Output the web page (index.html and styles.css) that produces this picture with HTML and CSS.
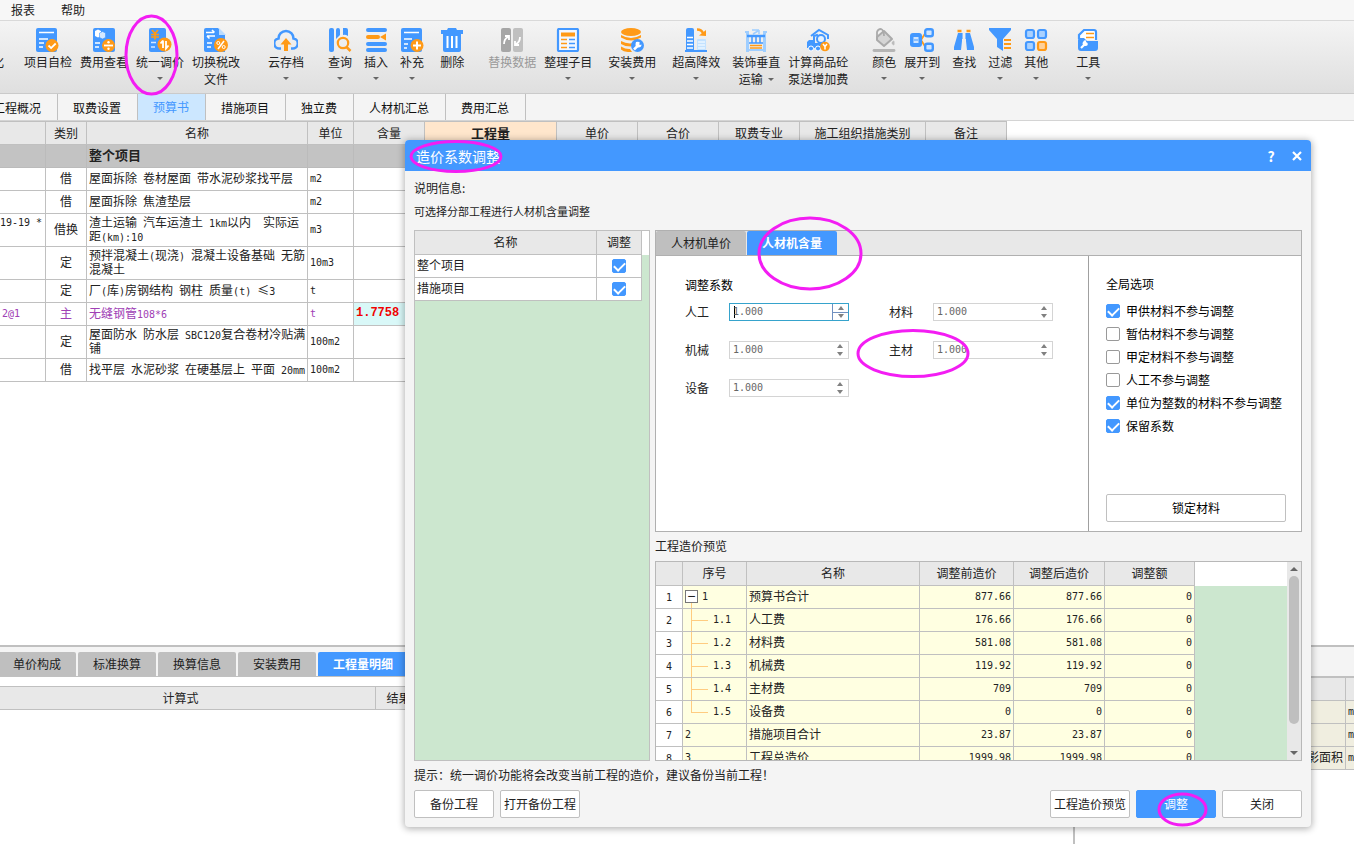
FILE: index.html
```html
<!DOCTYPE html>
<html lang="zh-CN">
<head>
  <meta charset="UTF-8">
  <title>造价系数调整</title>
  <link rel="stylesheet" href="styles.css">
</head>
<body>
  <nav class="menu">
    <a href="#">报表</a>
    <a href="#">帮助</a>
  </nav>

  <div class="toolbar">
    <button class="tool first"><svg viewBox="0 0 24 24"></svg>化</button>
    <button class="tool g20">
      <svg viewBox="0 0 24 24">
        <rect x="0" y="0" width="21" height="24" rx="2" fill="#4398ff"/>
        <path d="M3 4.5h15M3 11h9M3 15h5M3 19h4" stroke="#fff" stroke-width="1.6"/>
        <circle cx="16" cy="17.5" r="6.5" fill="#ff9a17"/>
        <path d="M12.5 17.5l2.6 2.6 4.6-4.6" fill="none" stroke="#fff" stroke-width="1.8"/>
      </svg>
      项目自检
    </button>
    <button class="tool">
      <svg viewBox="0 0 24 24">
        <rect x="1" y="0" width="22" height="24" rx="2" fill="#4398ff"/>
        <path d="M3 3l3-1.500 3 1.500v5l-3 1.500-3-1.500z" fill="#fff"/>
        <path d="M7.500 5l3-1.500 3 1.500v4.500l-3 1.500-3-1.500z" fill="#d5e8ff" stroke="#4398ff" stroke-width=".6"/>
        <path d="M3 15h5M3 19h4" stroke="#fff" stroke-width="1.6"/>
        <circle cx="16.5" cy="17.5" r="6.5" fill="#ff9a17"/>
        <path d="M12 17.5h9" stroke="#fff" stroke-width="1.8"/>
        <circle cx="16.5" cy="14.2" r="1.2" fill="#fff"/><circle cx="16.5" cy="20.8" r="1.2" fill="#fff"/>
      </svg>
      费用查看
    </button>
    <button class="tool">
      <svg viewBox="0 0 24 24">
        <rect x="1" y="0" width="17" height="24" rx="2" fill="#4398ff"/>
        <path d="M4 2l3 3.500 3-3.500M7 5v6.500M3 6.500h8M3 9h8" fill="none" stroke="#ff9a17" stroke-width="1.700"/>
        <path d="M3 14.5h5M3 19h4" stroke="#d5e8ff" stroke-width="1.5"/>
        <circle cx="16.5" cy="16.5" r="7" fill="#ff9a17"/>
        <path d="M15 12.500v7.500M12.500 15.500l2.500-3M18 13v7.500l2.500-3" fill="none" stroke="#fff" stroke-width="1.8"/>
      </svg>
      统一调价
      <i class="down"></i>
    </button>
    <button class="tool">
      <svg viewBox="0 0 24 24">
        <path d="M2 0h12l7 7v17H2q-2 0-2-2V2q0-2 2-2z" fill="#4398ff"/>
        <path d="M15 0l7 7h-7z" fill="#b9dbff"/>
        <path d="M2 4.500h8M8 2l2.500 2.500M11 8H3M5.500 10.500L3 8" fill="none" stroke="#fff" stroke-width="1.600"/>
        <path d="M3 15h5M3 19h4" stroke="#fff" stroke-width="1.5"/>
        <circle cx="17" cy="17" r="7" fill="#ff9a17"/>
        <path d="M20 13l-6 8" stroke="#fff" stroke-width="1.5"/>
        <circle cx="14.3" cy="15" r="1.500" fill="none" stroke="#fff"/><circle cx="19.700" cy="19" r="1.500" fill="none" stroke="#fff"/>
      </svg>
      <span>切换税改<br>文件</span>
    </button>
    <button class="tool g28">
      <svg viewBox="0 0 24 24">
        <path d="M7 20.500H6A5 5 0 0 1 4.500 10.500A7.500 7.500 0 0 1 19.500 10.500A5 5 0 0 1 18 20.500H17" fill="none" stroke="#4398ff" stroke-width="2.600"/>
        <path d="M12 10l5.500 6.500H14V23h-4v-6.500H6.500z" fill="#ff9a17"/>
      </svg>
      云存档
      <i class="down"></i>
    </button>
    <button class="tool g24">
      <svg viewBox="0 0 24 24">
        <rect x="1" y="0" width="5" height="24" rx="2" fill="#4398ff"/>
        <path d="M8 2q0-2 2-2t2 2v5l-4 4zM15 0h3q2 0 2 2v6q-3-2-5-1z" fill="#4398ff"/>
        <circle cx="15" cy="15" r="5.200" fill="none" stroke="#ff9a17" stroke-width="2.200"/>
        <path d="M18.500 19l4 4" stroke="#ff9a17" stroke-width="2.500"/>
      </svg>
      查询
      <i class="down"></i>
    </button>
    <button class="tool g12">
      <svg viewBox="0 0 24 24">
        <path d="M4 2h17M4 16h17M4 22h17" stroke="#4398ff" stroke-width="4" stroke-linecap="round"/>
        <path d="M4 9h10" stroke="#ff9a17" stroke-width="4" stroke-linecap="round"/>
        <path d="M16 9l6-3.500v7z" fill="#ff9a17"/>
      </svg>
      插入
      <i class="down"></i>
    </button>
    <button class="tool g12">
      <svg viewBox="0 0 24 24">
        <rect x="1" y="0" width="21" height="24" rx="2" fill="#4398ff"/>
        <path d="M4 4.500h15M4 11h8M4 16h4M4 20h3" stroke="#fff" stroke-width="1.600"/>
        <circle cx="17" cy="17.500" r="6.500" fill="#ff9a17"/>
        <path d="M13 17.500h8M17 13.500v8" stroke="#fff" stroke-width="2"/>
      </svg>
      补充
      <i class="down"></i>
    </button>
    <button class="tool g16">
      <svg viewBox="0 0 24 24">
        <path d="M1 2h6l1-2h8l1 2h6v4H1z" fill="#4398ff"/>
        <path d="M3 5h18v17q0 2-2 2H5q-2 0-2-2z" fill="#4398ff"/>
        <path d="M7.500 8v12M12 8v12M16.500 8v12" stroke="#fff" stroke-width="2"/>
      </svg>
      删除
    </button>
    <button class="tool g24 off" disabled>
      <svg viewBox="0 0 24 24">
        <rect x="1" y="0" width="10" height="24" rx="2" fill="#a6a6a6"/>
        <rect x="13" y="0" width="10" height="24" rx="2" fill="#c0c0c0"/>
        <path d="M4 16q0-5 4-7M5 8h4v4M20 9q0 5-4 7M19 17h-4v-4" fill="none" stroke="#fff" stroke-width="1.800"/>
      </svg>
      替换数据
    </button>
    <button class="tool">
      <svg viewBox="0 0 24 24">
        <rect x="2" y="1" width="20" height="22" rx="1" fill="#f3f8ff" stroke="#4398ff" stroke-width="2.200"/>
        <path d="M5 6.500h14" stroke="#ff9a17" stroke-width="4"/>
        <path d="M5 11.500h6M5 15.500h6M5 19.500h6" stroke="#ff9a17" stroke-width="1.600"/>
        <path d="M13 11.500h6M13 15.500h6M13 19.500h6" stroke="#4398ff" stroke-width="1.600"/>
      </svg>
      整理子目
      <i class="down"></i>
    </button>
    <button class="tool g16">
      <svg viewBox="0 0 24 24">
        <ellipse cx="11" cy="4" rx="10" ry="4" fill="#ff9a17"/>
        <path d="M1 7q10 6 20 0v2.500q-10 6-20 0zM1 13q6 3.500 13 2l-3 3.500q-6 0-10-2.500zM1 18.500q5 3 9 2.500l2 3Q4 24.500 1 21.500z" fill="#ff9a17"/>
        <circle cx="17.500" cy="17.500" r="6.500" fill="#4398ff"/>
        <path d="M14 21.500l4-4" stroke="#fff" stroke-width="2.500"/>
        <path d="M16 14q3-1 4 1l-1 1 1 1 1.500-.5q0 3-3 3t-3-3q0-1 .5-2.500z" fill="#fff"/>
      </svg>
      安装费用
      <i class="down"></i>
    </button>
    <button class="tool g16">
      <svg viewBox="0 0 24 24">
        <path d="M2 22V2q0-2 2-2h4q2 0 2 2v20z" fill="#4398ff"/>
        <path d="M1 23h22" stroke="#4398ff" stroke-width="2"/>
        <path d="M3 9.500h6M3 13h6M3 16.500h6M3 20h6" stroke="#fff" stroke-width="1.600"/>
        <rect x="13" y="11" width="9" height="11" rx="1" fill="#c3e2ff"/>
        <path d="M14 14h7M14 17h7M14 20h7" stroke="#fff" stroke-width="1.200"/>
        <path d="M13 1.500q5 0 6 4" fill="none" stroke="#ff9a17" stroke-width="2.400"/>
        <path d="M15 7.500l7 .5V2z" fill="#ff9a17"/>
      </svg>
      超高降效
      <i class="down"></i>
    </button>
    <button class="tool g12">
      <svg viewBox="0 0 24 24">
        <path d="M3.500 3v21M20.500 3v21" stroke="#9fceff" stroke-width="3"/>
        <path d="M8 2h7M15 2v4M9 6l5-3" fill="none" stroke="#9fceff" stroke-width="1.500"/>
        <path d="M1 4h4M19 4h4M2 22h20" stroke="#9fceff" stroke-width="2"/>
        <path d="M3 8h18" stroke="#4398ff" stroke-width="2.500"/>
        <path d="M5 15h14M8 9v6M12 9v6M16 9v6" stroke="#4398ff" stroke-width="1.500"/>
        <path d="M6 17.500h12M6 20h12" stroke="#ff9a17" stroke-width="1.500"/>
      </svg>
      <span>装饰垂直</span>
      <span>运输 <i class="down inline"></i></span>
    </button>
    <button class="tool">
      <svg viewBox="0 0 24 24">
        <path d="M5 8l8-6 9 5v4" fill="none" stroke="#4398ff" stroke-width="2"/>
        <path d="M8 16V8l3-1 2 3" fill="none" stroke="#4398ff" stroke-width="2"/>
        <circle cx="15" cy="11" r="4" fill="#e4f1ff" stroke="#4398ff" stroke-width="2"/>
        <path d="M1 14l2-2h4v3h9v5H1z" fill="#4398ff"/>
        <circle cx="5" cy="20.500" r="2.500" fill="#4398ff" stroke="#fff"/><circle cx="12" cy="20.500" r="2.500" fill="#4398ff" stroke="#fff"/>
        <circle cx="19" cy="18.500" r="4.800" fill="#ff9a17"/>
        <path d="M17 16l2 2.500 2-2.500M19 18.500v3" fill="none" stroke="#fff" stroke-width="1.500"/>
      </svg>
      <span>计算商品砼<br>泵送增加费</span>
    </button>
    <button class="tool g24">
      <svg viewBox="0 0 24 24">
        <path d="M5 9l7-6 8 8-8 7-7-6z" fill="#d5d5d5" stroke="#aaa" stroke-width="2" stroke-linejoin="round"/>
        <path d="M5 9V4q1-3 4-3 3 1 3 7" fill="none" stroke="#aaa" stroke-width="1.800"/>
        <path d="M20 15q2-4 2 0t-2 0z" fill="#bbb" stroke="#bbb"/>
        <path d="M2 22.500h20" stroke="#b5b5b5" stroke-width="2.800" stroke-linecap="round"/>
      </svg>
      颜色
      <i class="down"></i>
    </button>
    <button class="tool">
      <svg viewBox="0 0 24 24">
        <path d="M11 12l5-8M11 12l5 8" stroke="#ff9a17" stroke-width="1.800"/>
        <rect x="0" y="5" width="12" height="14" rx="3" fill="#4398ff"/>
        <rect x="3.500" y="9" width="5" height="6" fill="#cfe5ff"/>
        <path d="M4 12h4" stroke="#4398ff"/>
        <rect x="15.200" y="1.200" width="7.600" height="7" rx="2" fill="#cfe5ff" stroke="#4398ff" stroke-width="2.400"/>
        <rect x="15.200" y="15.800" width="7.600" height="7" rx="2" fill="#cfe5ff" stroke="#4398ff" stroke-width="2.400"/>
      </svg>
      展开到
      <i class="down"></i>
    </button>
    <button class="tool g12">
      <svg viewBox="0 0 24 24">
        <path d="M6 5h4v8l-1 9H2v-3zM14 5h4l4 14v3h-7l-1-9z" fill="#4398ff"/>
        <path d="M10.500 5v6M13.500 5v6" stroke="#8cc0ff"/>
        <path d="M5.500 3h4M14.500 3h4" stroke="#ff9a17" stroke-width="2.400"/>
      </svg>
      查找
    </button>
    <button class="tool g12">
      <svg viewBox="0 0 24 24">
        <path d="M1 0h22v2l-8 9v12l-6-4v-8L1 2z" fill="#4398ff"/>
        <path d="M16 12h7M16 16h7M16 20h7" stroke="#ff9a17" stroke-width="1.800"/>
      </svg>
      过滤
      <i class="down"></i>
    </button>
    <button class="tool g12">
      <svg viewBox="0 0 24 24">
        <g fill="#a9d1ff" stroke="#4398ff" stroke-width="2.200">
          <rect x="2" y="2" width="8" height="8" rx="2"/>
          <rect x="14" y="2" width="8" height="8" rx="2"/>
          <rect x="2" y="14" width="8" height="8" rx="2"/>
        </g>
        <rect x="14" y="14" width="8" height="8" rx="2" fill="#ffd199" stroke="#ff9a17" stroke-width="2.200"/>
      </svg>
      其他
      <i class="down"></i>
    </button>
    <button class="tool g28">
      <svg viewBox="0 0 24 24">
        <path d="M3 11V7l5-5h10q2 0 2 2v8" fill="#fff" stroke="#4398ff" stroke-width="2.200"/>
        <path d="M10 5.500h8M10 9.500h8" stroke="#ff9a17" stroke-width="1.600"/>
        <path d="M2 12q0-2 2-2h4l3 3h11v7q0 3-3 3H5q-3 0-3-3z" fill="#4398ff"/>
        <path d="M5 20l4-4" stroke="#fff" stroke-width="2.200"/>
        <path d="M8 12.500q3-1 2 1.500l1.500 1q1 3-2 3t-3-3z" fill="#fff"/>
      </svg>
      工具
      <i class="down"></i>
    </button>
  </div>

  <nav class="pages">
    <a href="#">工程概况</a>
    <a href="#">取费设置</a>
    <a href="#" class="active">预算书</a>
    <a href="#">措施项目</a>
    <a href="#">独立费</a>
    <a href="#">人材机汇总</a>
    <a href="#">费用汇总</a>
  </nav>

  <main class="budget">
    <table class="grid budget-table">
      <colgroup>
        <col class="c-code"><col class="c-type"><col class="c-name"><col class="c-unit"><col class="c-amount"><col class="c-qty">
        <col class="c-price"><col class="c-price"><col class="c-price"><col class="c-measure"><col class="c-price">
      </colgroup>
      <thead>
        <tr>
          <th></th><th>类别</th><th>名称</th><th>单位</th><th>含量</th><th class="current">工程量</th>
          <th>单价</th><th>合价</th><th>取费专业</th><th>施工组织措施类别</th><th>备注</th>
        </tr>
      </thead>
      <tbody>
        <tr class="group"><td></td><td></td><td>整个项目</td><td></td><td></td><td></td><td></td><td></td><td></td><td></td><td></td></tr>
        <tr><td></td><td class="mid">借</td><td>屋面拆除&ensp;卷材屋面&ensp;带水泥砂浆找平层</td><td class="n">m2</td><td></td></tr>
        <tr><td></td><td class="mid">借</td><td>屋面拆除&ensp;焦渣垫层</td><td class="n">m2</td><td></td></tr>
        <tr class="tall"><td class="n code">19-19 *</td><td class="mid">借换</td><td>渣土运输&ensp;汽车运渣土&ensp;<span class="n">1km</span>以内&ensp;&ensp;实际运<br>距<span class="n">(km):10</span></td><td class="n">m3</td><td></td></tr>
        <tr class="tall"><td></td><td class="mid">定</td><td>预拌混凝土<span class="n">(</span>现浇<span class="n">)</span>&ensp;混凝土设备基础&ensp;无筋<br>混凝土</td><td class="n">10m3</td><td></td></tr>
        <tr><td></td><td class="mid">定</td><td>厂<span class="n">(</span>库<span class="n">)</span>房钢结构&ensp;钢柱&ensp;质量<span class="n">(t)</span>&ensp;≤<span class="n">3</span></td><td class="n">t</td><td></td></tr>
        <tr class="main-material"><td class="n">2@1</td><td class="mid">主</td><td>无缝钢管<span class="n">108*6</span></td><td class="n">t</td><td class="changed">1.7758</td></tr>
        <tr class="tall"><td></td><td class="mid">定</td><td>屋面防水&ensp;防水层&ensp;<span class="n">SBC120</span>复合卷材冷贴满<br>铺</td><td class="n">100m2</td><td></td></tr>
        <tr><td></td><td class="mid">借</td><td>找平层&ensp;水泥砂浆&ensp;在硬基层上&ensp;平面&ensp;<span class="n">20mm</span></td><td class="n">100m2</td><td></td></tr>
      </tbody>
    </table>
  </main>

  <section class="details">
    <div class="details-left">
      <nav class="subtabs">
        <a href="#">单价构成</a>
        <a href="#">标准换算</a>
        <a href="#">换算信息</a>
        <a href="#">安装费用</a>
        <a href="#" class="active">工程量明细</a>
      </nav>
      <table class="grid formula-table">
        <colgroup><col class="c-formula"><col class="c-result"><col></colgroup>
        <tr><th>计算式</th><th>结果</th><th></th></tr>
      </table>
    </div>
    <div class="details-right">
      <div class="strip"></div>
      <table class="grid figure-table">
        <colgroup><col class="c-figure"><col class="c-unit"></colgroup>
        <tr><th></th><th></th></tr>
        <tr><td></td><td class="n">m</td></tr>
        <tr><td></td><td class="n">m</td></tr>
        <tr><td class="num">影面积</td><td class="n">m</td></tr>
      </table>
    </div>
  </section>

  <section class="dialog">
    <header class="dialog-title">
      <h1>造价系数调整</h1>
      <button>?</button>
      <button>
        <svg viewBox="0 0 10 10"><path d="M1 1l8 8M9 1l-8 8" stroke="#fff" stroke-width="2.200"/></svg>
      </button>
    </header>

    <div class="dialog-body">
      <p class="info">说明信息:</p>
      <p class="info small">可选择分部工程进行人材机含量调整</p>

      <div class="panels">
        <div class="scope">
          <div class="blank"></div>
          <table class="grid scope-table">
            <colgroup><col class="c-scope"><col class="c-check"></colgroup>
            <thead><tr><th>名称</th><th>调整</th></tr></thead>
            <tbody>
              <tr><td><label for="all">整个项目</label></td><td class="mid"><input type="checkbox" id="all" checked></td></tr>
              <tr><td><label for="measure">措施项目</label></td><td class="mid"><input type="checkbox" id="measure" checked></td></tr>
            </tbody>
          </table>
        </div>

        <div class="right">
          <div class="adjust">
            <nav class="adjust-tabs">
              <a href="#">人材机单价</a>
              <a href="#" class="active">人材机含量</a>
            </nav>
            <div class="adjust-content">
              <form class="factors">
                <h2>调整系数</h2>
                <div class="factor-grid">
                  <div class="factor"><label for="f1">人工</label><span class="spin focus"><input type="text" id="f1" value="1.000"><span class="arrows"><i class="up"></i><i class="down"></i></span></span></div>
                  <div class="factor"><label for="f2">材料</label><span class="spin"><input type="text" id="f2" value="1.000"><span class="arrows"><i class="up"></i><i class="down"></i></span></span></div>
                  <div class="factor"><label for="f3">机械</label><span class="spin"><input type="text" id="f3" value="1.000"><span class="arrows"><i class="up"></i><i class="down"></i></span></span></div>
                  <div class="factor"><label for="f4">主材</label><span class="spin"><input type="text" id="f4" value="1.000"><span class="arrows"><i class="up"></i><i class="down"></i></span></span></div>
                  <div class="factor"><label for="f5">设备</label><span class="spin"><input type="text" id="f5" value="1.000"><span class="arrows"><i class="up"></i><i class="down"></i></span></span></div>
                </div>
              </form>
              <div class="options">
                <h2>全局选项</h2>
                <label><input type="checkbox" checked>甲供材料不参与调整</label>
                <label><input type="checkbox">暂估材料不参与调整</label>
                <label><input type="checkbox">甲定材料不参与调整</label>
                <label><input type="checkbox">人工不参与调整</label>
                <label><input type="checkbox" checked>单位为整数的材料不参与调整</label>
                <label><input type="checkbox" checked>保留系数</label>
                <button class="btn lock">锁定材料</button>
              </div>
            </div>
          </div>

          <h2 class="preview-title">工程造价预览</h2>
          <div class="preview">
            <div class="preview-view">
              <div class="blank"></div>
              <table class="grid preview-table">
                <colgroup><col class="c-row"><col class="c-no"><col class="c-item"><col class="c-before"><col class="c-after"><col class="c-diff"></colgroup>
                <thead><tr><th></th><th>序号</th><th>名称</th><th>调整前造价</th><th>调整后造价</th><th>调整额</th></tr></thead>
                <tbody>
                  <tr><th class="n">1</th><td class="n tree"><span class="knot"><button>−</button></span>1</td><td>预算书合计</td><td class="n num">877.66</td><td class="n num">877.66</td><td class="n num">0</td></tr>
                  <tr><th class="n">2</th><td class="n tree"><span class="twig"></span>1.1</td><td>人工费</td><td class="n num">176.66</td><td class="n num">176.66</td><td class="n num">0</td></tr>
                  <tr><th class="n">3</th><td class="n tree"><span class="twig"></span>1.2</td><td>材料费</td><td class="n num">581.08</td><td class="n num">581.08</td><td class="n num">0</td></tr>
                  <tr><th class="n">4</th><td class="n tree"><span class="twig"></span>1.3</td><td>机械费</td><td class="n num">119.92</td><td class="n num">119.92</td><td class="n num">0</td></tr>
                  <tr><th class="n">5</th><td class="n tree"><span class="twig"></span>1.4</td><td>主材费</td><td class="n num">709</td><td class="n num">709</td><td class="n num">0</td></tr>
                  <tr><th class="n">6</th><td class="n tree"><span class="twig last"></span>1.5</td><td>设备费</td><td class="n num">0</td><td class="n num">0</td><td class="n num">0</td></tr>
                  <tr><th class="n">7</th><td class="n">2</td><td>措施项目合计</td><td class="n num">23.87</td><td class="n num">23.87</td><td class="n num">0</td></tr>
                  <tr><th class="n">8</th><td class="n">3</td><td>工程总造价</td><td class="n num">1999.98</td><td class="n num">1999.98</td><td class="n num">0</td></tr>
                </tbody>
              </table>
            </div>
            <div class="scrollbar"><i class="up"></i><div class="thumb"></div><i class="down"></i></div>
          </div>
        </div>
      </div>

      <p class="hint">提示：统一调价功能将会改变当前工程的造价，建议备份当前工程！</p>
      <footer class="actions">
        <button class="btn">备份工程</button>
        <button class="btn">打开备份工程</button>
        <span class="spacer"></span>
        <button class="btn">工程造价预览</button>
        <button class="btn primary">调整</button>
        <button class="btn">关闭</button>
      </footer>
    </div>
  </section>

  <!-- hand-drawn marks -->
  <svg class="marks" width="1354" height="844" viewBox="0 0 1354 844">
    <ellipse cx="151.500" cy="55" rx="25.500" ry="39"/>
    <ellipse cx="456" cy="156.500" rx="45" ry="15"/>
    <ellipse cx="810" cy="253.500" rx="51" ry="35.500"/>
    <ellipse cx="913" cy="353.500" rx="55" ry="23"/>
    <ellipse cx="1182.500" cy="809.500" rx="23.500" ry="15.500"/>
  </svg>
</body>
</html>
```

FILE: styles.css
```css
* {
  box-sizing: border-box;
}
body {
  margin: 0;
  height: 100vh;
  position: relative;
  display: flex;
  flex-direction: column;
  overflow: hidden;
  background: #fff;
  color: #222;
  font: 12px/16px "Noto Sans CJK SC", sans-serif;
}
h1, h2, p {
  margin: 0;
  font-size: 12px;
  font-weight: normal;
}
a {
  color: inherit;
  text-decoration: none;
}
button, input {
  font: inherit;
  color: inherit;
  margin: 0;
  padding: 0;
}

/* menu and toolbar */
.menu {
  display: flex;
  gap: 26px;
  height: 21px;
  padding: 2px 11px;
  background: #f7f7f7;
  border-bottom: 1px solid #d9d9d9;
}
.toolbar {
  display: flex;
  align-items: flex-start;
  height: 73px;
  padding-top: 7px;
  background: linear-gradient(#f4f4f4, #dfdfdf);
  border-bottom: 1px solid #cacaca;
}
.tool {
  flex: none;
  display: flex;
  flex-direction: column;
  align-items: center;
  margin-left: 8px;
  border: 0;
  background: none;
  line-height: 17px;
  white-space: nowrap;
}
.tool svg {
  width: 24px;
  height: 24px;
  margin-bottom: 1px;
}
.tool.first {
  width: 12px;
  margin-left: -8px;
}
.tool.g12 { margin-left: 12px; }
.tool.g16 { margin-left: 16px; }
.tool.g20 { margin-left: 20px; }
.tool.g24 { margin-left: 24px; }
.tool.g28 { margin-left: 28px; }
.tool.off {
  color: #999;
}
.up, .down {
  display: block;
  width: 0;
  height: 0;
  border: 3px solid transparent;
}
.down {
  border-top-color: #666;
  border-bottom: 0;
}
.up {
  border-bottom-color: #666;
  border-top: 0;
}
.tool .down {
  margin-top: 7px;
}
.tool .down.inline {
  display: inline-block;
  margin: 0 0 3px 2px;
}

/* page tabs */
.pages {
  display: flex;
  height: 27px;
  background: #f4f4f4;
  border-bottom: 1px solid #d4d4d4;
}
.pages a {
  padding: 6px 16px 0 15px;
  border-right: 1px solid #c0c0c0;
  white-space: nowrap;
  color: #111;
}
.pages a:first-child {
  margin-left: -22px;
}
.pages a.active {
  padding-top: 5px;
  background: #cce7ff;
  color: #4398ff;
}

/* tables */
.grid {
  border-collapse: separate;
  border-spacing: 0;
  table-layout: fixed;
}
.grid th, .grid td {
  height: 23px;
  padding: 0 2px;
  border-right: 1px solid #c0c0c0;
  border-bottom: 1px solid #c0c0c0;
  line-height: 14px;
  white-space: nowrap;
  text-align: left;
}
.grid td {
  padding-bottom: 2px;
}
.grid th {
  background: #e8e8e8;
  font-weight: normal;
  text-align: center;
}
.grid td.mid {
  text-align: center;
}
.grid td.num {
  text-align: right;
}
.n, .grid .n {
  font-family: "DejaVu Sans Mono", monospace;
  font-size: 10px;
}
.grid td.n {
  padding-bottom: 0;
}
.grid span.n {
  line-height: 10px;
}
.budget {
  flex: 1;
  min-height: 0;
  overflow: hidden;
}
.budget-table {
  width: 1007px;
  border-top: 1px solid #c0c0c0;
}
.budget-table .tall td {
  height: 33px;
}
.budget-table .group td {
  background: #c3c3c3;
  border-color: #bbb;
  font-size: 13px;
  font-weight: bold;
}
.budget-table .current {
  background: #ffe6cc;
  font-size: 13px;
  font-weight: bold;
}
.budget-table td.code {
  padding: 2px 5px 0 0;
  text-align: right;
  vertical-align: top;
}
.main-material {
  color: #a040b5;
}
.main-material .changed {
  background: #d9f8f8;
  color: #f00000;
  font: bold 12px/14px "Liberation Mono", monospace;
}
.c-code, .c-unit { width: 46px; }
.c-type { width: 41px; }
.c-name { width: 221px; }
.c-amount { width: 71px; }
.c-qty { width: 132px; }
.c-price { width: 81px; }
.c-measure { width: 126px; }
.c-formula { width: 390px; }
.c-result { width: 46px; }
.c-figure { width: 271px; }
.c-scope { width: 182px; }
.c-check { width: 45px; }
.c-row { width: 27px; }
.c-no { width: 64px; }
.c-item { width: 173px; }
.c-before { width: 94px; }
.c-after { width: 91px; }
.c-diff { width: 90px; }

/* lower part */
.details {
  display: flex;
  height: 199px;
  border-top: 2px solid #c0c0c0;
}
.details-left {
  flex: 1;
  min-width: 0;
}
.details-right {
  flex: 0 0 281px;
  overflow: hidden;
  border-left: 2px solid #c0c0c0;
}
.subtabs {
  display: flex;
  gap: 2px;
  height: 30px;
  padding-top: 5px;
  background: #f4f4f4;
  border-bottom: 1px solid #c0c0c0;
}
.subtabs a {
  padding: 4px 15px;
  border-radius: 2px 2px 0 0;
  background: #bfbfbf;
  white-space: nowrap;
}
.subtabs a:first-child {
  margin-left: -2px;
}
.subtabs a.active, .adjust-tabs a.active {
  background: #4398ff;
  color: #fff;
  font-weight: bold;
}
.formula-table {
  width: calc(100% + 14px);
  margin: 9px 0 0 -14px;
  border-top: 1px solid #c0c0c0;
}
.strip {
  height: 29px;
  background: #f4f4f4;
}
.figure-table {
  width: 317px;
  border-top: 2px solid #c0c0c0;
}
.figure-table td {
  background: #f0eee0;
}

/* dialog window */
.dialog {
  position: absolute;
  left: 405px;
  top: 140px;
  right: 43px;
  bottom: 17px;
  display: flex;
  flex-direction: column;
  border-radius: 4px;
  background: #f4f4f4;
  box-shadow: 0 1px 7px 1px rgba(0, 0, 0, 0.3);
}
.dialog-title {
  display: flex;
  align-items: center;
  gap: 6px;
  height: 31px;
  padding: 0 4px 0 11px;
  border-radius: 4px 4px 0 0;
  background: #4398ff;
  color: #fff;
}
.dialog-title h1 {
  flex: 1;
  font-size: 14px;
}
.dialog-title button {
  display: flex;
  align-items: center;
  justify-content: center;
  width: 20px;
  height: 20px;
  border: 0;
  background: none;
  font-size: 14px;
  font-weight: bold;
}
.dialog-title svg {
  width: 10px;
  height: 10px;
}
.dialog-body {
  flex: 1;
  min-height: 0;
  display: flex;
  flex-direction: column;
  padding: 9px;
}
.info {
  height: 23px;
}
.info.small {
  height: 27px;
  font-size: 11px;
}
.panels {
  flex: 1;
  min-height: 0;
  display: flex;
  gap: 5px;
}
.scope {
  flex: 0 0 236px;
  position: relative;
  border: 1px solid #c0c0c0;
  background: #cce7cf;
}
.blank {
  height: 24px;
  margin-bottom: -24px;
  background: #fff;
}
.scope-table, .preview-table {
  position: relative;
  background: #fff;
}
.scope-table {
  width: 227px;
}
.scope-table thead th, .preview-table thead th {
  height: 24px;
  padding-bottom: 2px;
}
.right {
  flex: 1;
  min-width: 0;
  display: flex;
  flex-direction: column;
}
.adjust {
  flex: 0 0 302px;
  display: flex;
  flex-direction: column;
  border: 1px solid #b0b0b0;
  background: #fff;
}
.adjust-tabs {
  display: flex;
  gap: 1px;
  height: 25px;
  background: #e8e8e8;
  border-bottom: 1px solid #b0b0b0;
}
.adjust-tabs a {
  padding: 4px 15px;
  border-radius: 2px 2px 0 0;
  background: #bfbfbf;
}
.adjust-content {
  flex: 1;
  display: flex;
}
.factors {
  flex: 1;
  padding: 21px 29px;
  color: #000;
}
.factor-grid {
  display: grid;
  grid-template-columns: 164px 164px;
  gap: 20px 40px;
  padding-top: 10px;
}
.factor {
  display: flex;
  align-items: center;
  gap: 20px;
  height: 18px;
  color: #222;
}
.factor label {
  flex: none;
}
.spin {
  flex: 1;
  min-width: 0;
  display: flex;
  height: 18px;
  border: 1px solid #d4d4d4;
}
.spin input {
  flex: 1;
  min-width: 0;
  padding-left: 3px;
  border: 0;
  outline: 0;
  background: none;
  color: #666;
  font: 10px/16px "DejaVu Sans Mono", monospace;
}
.spin .arrows {
  flex: none;
  display: flex;
  flex-direction: column;
  justify-content: space-around;
  align-items: center;
  width: 16px;
}
.spin .up { border-bottom: 4px solid #808080; }
.spin .down { border-top: 4px solid #808080; }
.spin.focus {
  border-color: #36a3cc;
}
.spin.focus .arrows {
  border-left: 1px solid #7090c0;
  background: linear-gradient(#7090c0, #7090c0) center / 100% 1px no-repeat;
}
.spin.focus input {
  background: linear-gradient(#000, #000) 4px center / 1px 12px no-repeat;
}
.options {
  flex: 0 0 213px;
  display: flex;
  flex-direction: column;
  padding: 20px 15px 9px 17px;
  border-left: 1px solid #a0a0a0;
  color: #000;
}
.options h2 {
  height: 23px;
}
.options label {
  display: flex;
  align-items: center;
  gap: 6px;
  height: 23px;
  white-space: nowrap;
}
input[type="checkbox"] {
  appearance: none;
  flex: none;
  display: inline-block;
  width: 14px;
  height: 14px;
  border: 1px solid #999;
  border-radius: 2px;
  background: #fff;
  vertical-align: middle;
}
input[type="checkbox"]:checked {
  border-color: #4398ff;
  background: #4398ff;
}
input[type="checkbox"]:checked::before {
  content: "";
  display: block;
  width: 9px;
  height: 5px;
  margin: 2px 1px;
  border: solid #fff;
  border-width: 0 0 2px 2px;
  transform: rotate(-45deg);
}
.btn {
  width: 80px;
  height: 28px;
  border: 1px solid #c0c0c0;
  border-radius: 2px;
  background: #fff;
  white-space: nowrap;
}
.btn.primary {
  border-color: #4398ff;
  background: #4398ff;
  color: #fff;
}
.btn.lock {
  width: auto;
  margin-top: auto;
}

/* cost preview */
.preview-title {
  padding: 6px 0 7px;
}
.preview {
  flex: 1;
  min-height: 0;
  display: flex;
  border: 1px solid #b8b8b8;
}
.preview-view {
  flex: 1;
  min-width: 0;
  overflow: hidden;
  background: #cce7cf;
}
.preview-table {
  width: 539px;
}
.preview-table td {
  background: #ffffe1;
}
.preview-table tbody th {
  padding-top: 2px;
  background: #fff;
}
.grid td.tree {
  padding: 0;
}
.twig, .knot {
  display: inline-block;
  height: 22px;
  vertical-align: middle;
}
.twig {
  width: 17px;
  margin: 0 5px 0 8px;
  background:
    linear-gradient(#ffcc80, #ffcc80) left center / 100% 1px no-repeat,
    linear-gradient(#ffcc80, #ffcc80) left top / 1px 100% no-repeat;
}
.twig.last {
  background:
    linear-gradient(#ffcc80, #ffcc80) left center / 100% 1px no-repeat,
    linear-gradient(#ffcc80, #ffcc80) left top / 1px 50% no-repeat;
}
.knot {
  width: 13px;
  margin: 0 4px 0 2px;
  padding-top: 4px;
  background: linear-gradient(#ffcc80, #ffcc80) 6px bottom / 1px 50% no-repeat;
}
.knot button {
  display: block;
  width: 13px;
  height: 13px;
  border: 1px solid #777;
  background: #fff;
  font: 14px/10px "Liberation Mono", monospace;
}
.scrollbar {
  flex: 0 0 14px;
  display: flex;
  flex-direction: column;
  align-items: center;
  padding: 5px 0;
  background: #e8e8e8;
}
.scrollbar .up { border-width: 0 4px 4px; }
.scrollbar .down { border-width: 4px 4px 0; }
.thumb {
  flex: 0 1 148px;
  width: 10px;
  margin: 5px 0 auto;
  border-radius: 5px;
  background: #bfbfbf;
}
.hint {
  padding: 6px 0 7px;
}
.actions {
  display: flex;
  gap: 6px;
}
.spacer {
  flex: 1;
}

.marks {
  position: absolute;
  left: 0;
  top: 0;
  pointer-events: none;
}
.marks ellipse {
  fill: none;
  stroke: #f31df3;
  stroke-width: 3;
}
```
